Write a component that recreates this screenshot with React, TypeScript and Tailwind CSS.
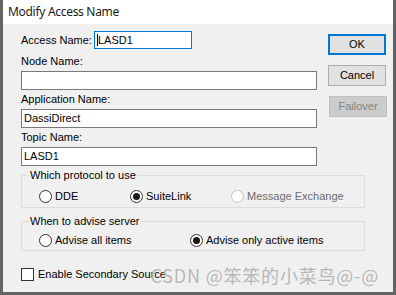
import React from "react";

function Radio({ checked, disabled, label }: { checked?: boolean; disabled?: boolean; label: string }) {
  return (
    <div className="flex items-center h-[14px]">
      <span
        className={
          "w-[13px] h-[13px] rounded-full border flex items-center justify-center bg-white shrink-0 " +
          (disabled ? "border-[#c2c2c2]" : "border-[#333333]")
        }
      >
        {checked && <span className="w-[7px] h-[7px] rounded-full bg-[#1a1a1a]" />}
      </span>
      <span className={"ml-[3px] leading-[13px] " + (disabled ? "text-[#6d6d6d]" : "text-black")}>{label}</span>
    </div>
  );
}

function Field({ value }: { value?: string }) {
  return (
    <div className="h-[19px] w-full bg-white border border-[#7a7a7a] flex items-center pl-[2px] leading-[13px]">
      {value}
    </div>
  );
}

export default function App() {
  return (
    <div
      className="w-[396px] h-[295px] bg-[#646464] flex flex-col px-[3px] pb-[3px] text-[11px] text-black overflow-hidden"
      style={{ fontFamily: '"Liberation Sans", Arial, sans-serif' }}
    >
      <div
        className="h-[24px] bg-white flex items-center pl-[5px] text-[12px] tracking-[-0.3px] text-[#1b1b1b] shrink-0"
        style={{ fontFamily: '"Noto Sans", "Liberation Sans", sans-serif' }}
      >
        Modify Access Name
      </div>
      <div className="flex-1 bg-[#f0f0f0] pl-[18px] relative">
        <div className="flex">
          <div className="w-[296px] pt-[7px] flex flex-col">
            <div className="flex items-center h-[18px]">
              <span className="w-[73px] leading-[13px]">Access Name:</span>
              <div className="w-[98px] h-[18px] bg-white border border-[#0078d7] flex items-center pl-[2px] leading-[13px]">
                <span className="w-[1px] h-[12px] bg-black" />
                LASD1
              </div>
            </div>
            <div className="mt-[6px] leading-[13px]">Node Name:</div>
            <div className="mt-[3px]">
              <Field />
            </div>
            <div className="mt-[3px] leading-[13px]">Application Name:</div>
            <div className="mt-[3px]">
              <Field value="DassiDirect" />
            </div>
            <div className="mt-[3px] leading-[13px]">Topic Name:</div>
            <div className="mt-[3px]">
              <Field value="LASD1" />
            </div>
          </div>
          <div className="ml-[11px] pt-[10px] flex flex-col gap-[10px]">
            <div className="w-[58px] h-[21px] bg-[#e1e1e1] border-2 border-[#0078d7] flex items-center justify-center leading-[13px]">
              OK
            </div>
            <div className="w-[58px] h-[21px] bg-[#e1e1e1] border border-[#adadad] flex items-center justify-center leading-[13px]">
              Cancel
            </div>
            <div className="w-[58px] h-[21px] bg-[#cccccc] border border-[#bfbfbf] flex items-center justify-center leading-[13px] text-[#838383] ml-[1px]">
              Failover
            </div>
          </div>
        </div>

        <fieldset className="mt-[3px] w-[344px] border border-[#dcdcdc] pb-[4px]">
          <legend className="ml-[7px] px-[1px] leading-[13px]">Which protocol to use</legend>
          <div className="flex pt-[7px] pl-[17px]">
            <div className="w-[91px]">
              <Radio label="DDE" />
            </div>
            <div className="w-[101px]">
              <Radio label="SuiteLink" checked />
            </div>
            <div>
              <Radio label="Message Exchange" disabled />
            </div>
          </div>
        </fieldset>

        <fieldset className="mt-[7px] w-[344px] border border-[#dcdcdc] pb-[3px]">
          <legend className="ml-[7px] px-[1px] leading-[13px]">When to advise server</legend>
          <div className="flex pt-[5px] pl-[17px]">
            <div className="w-[151px]">
              <Radio label="Advise all items" />
            </div>
            <div>
              <Radio label="Advise only active items" checked />
            </div>
          </div>
        </fieldset>

        <div className="mt-[17px] flex items-center h-[13px]">
          <span className="w-[13px] h-[13px] border border-[#333333] bg-white shrink-0" />
          <span className="ml-[4px] leading-[13px]">Enable Secondary Source</span>
        </div>

        <div
          className="absolute right-[14px] bottom-[8px] text-[18px] leading-[18px] tracking-[0.8px] text-[#acacac] opacity-85 whitespace-nowrap"
          style={{ fontFamily: '"Noto Sans CJK SC", "Noto Sans", sans-serif', textShadow: "0 0 1px rgba(255,255,255,0.8)" }}
        >
          CSDN @笨笨的小菜鸟@-@
        </div>
      </div>
    </div>
  );
}
